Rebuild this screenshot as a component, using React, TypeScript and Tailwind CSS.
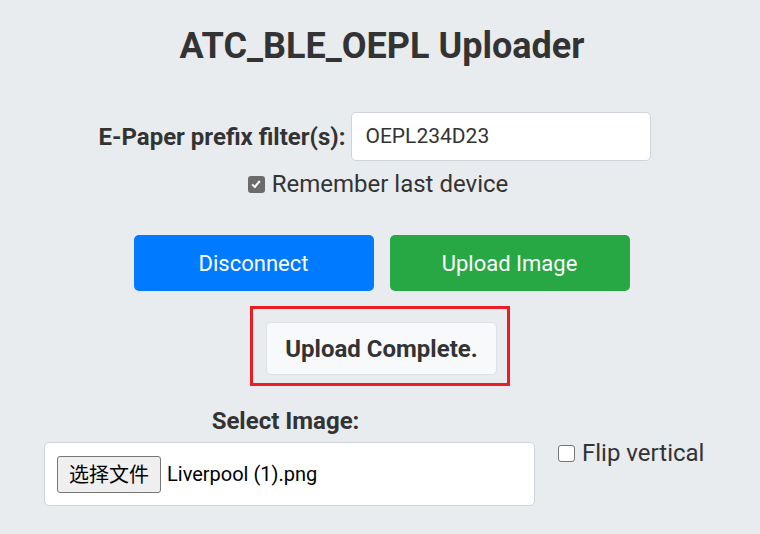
export default function App() {
  return (
    <div className="min-h-[534px] w-full bg-[#e9ecef] font-['Roboto',sans-serif] text-[#333] flex flex-col items-center">
      <h1 className="mt-[24px] text-[36px] font-bold leading-[44px] pl-[4px]">ATC_BLE_OEPL Uploader</h1>

      {/* prefix filter */}
      <div className="mt-[44px] flex items-center gap-[6px] pr-[10px]">
        <label className="text-[24px] font-bold">E-Paper prefix filter(s):</label>
        <div className="w-[300px] h-[49px] bg-white border border-[#ced4da] rounded-[5px] flex items-center px-[13px] text-[21px] text-[#333]">
          OEPL234D23
        </div>
      </div>

      <div className="mt-[8px] flex items-center gap-[7px] pr-[4px]">
        <span className="w-[17px] h-[17px] rounded-[3px] bg-[#6b6b6b] flex items-center justify-center">
          <svg width="12" height="12" viewBox="0 0 12 12">
            <path d="M2.2 6.4 L4.8 9 L9.8 3" fill="none" stroke="white" strokeWidth="2" />
          </svg>
        </span>
        <span className="text-[24px] leading-[30px] text-[#333]">Remember last device</span>
      </div>

      {/* action buttons */}
      <div className="mt-[36px] flex gap-[16px] pl-[3px]">
        <button className="w-[240px] h-[56px] rounded-[5px] bg-[#007bff] text-white text-[22px]">Disconnect</button>
        <button className="w-[240px] h-[56px] rounded-[5px] bg-[#28a745] text-white text-[22px]">Upload Image</button>
      </div>

      {/* status */}
      <div className="mt-[15px] border-[3px] border-[#ed1c24] pl-[13px] pr-[10px] pt-[13px] pb-[8px]">
        <div className="w-[231px] h-[53px] bg-[#f8f9fa] border border-[#dee2e6] rounded-[5px] flex items-center justify-center text-[24px] font-bold text-[#333]">
          Upload Complete.
        </div>
      </div>

      {/* file select */}
      <div className="mt-[20px] w-full flex items-start pl-[44px]">
        <div className="flex flex-col items-center">
          <div className="text-[24px] font-bold leading-[30px] pr-[8px]">Select Image:</div>
          <div className="mt-[6px] w-[491px] h-[64px] bg-white border border-[#ced4da] rounded-[5px] flex items-center pl-[12px]">
            <span className="h-[37px] w-[104px] flex items-center justify-center bg-[#efefef] border border-[#767676] rounded-[3px] text-[20px] text-black font-['Noto_Sans_CJK_SC',sans-serif]">
              选择文件
            </span>
            <span className="ml-[6px] text-[20px] text-black">Liverpool (1).png</span>
          </div>
        </div>
        <div className="ml-[23px] mt-[32px] flex items-center gap-[7px]">
          <span className="w-[17px] h-[17px] rounded-[3px] border-[1.5px] border-[#767676] bg-white" />
          <span className="text-[24px] leading-[30px] text-[#333]">Flip vertical</span>
        </div>
      </div>
    </div>
  );
}
